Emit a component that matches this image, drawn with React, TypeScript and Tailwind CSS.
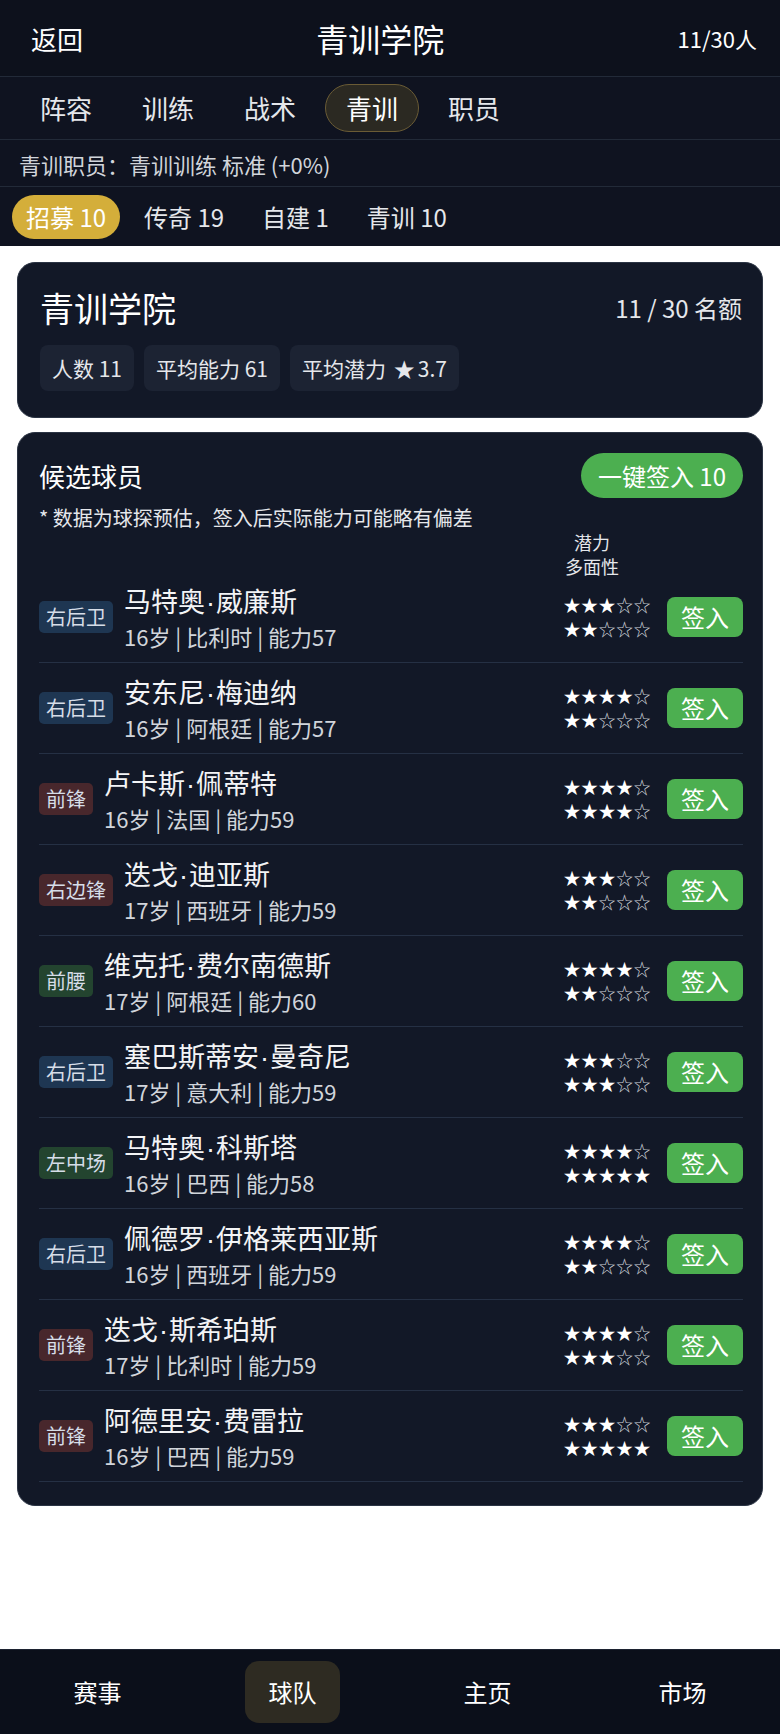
import React from 'react';

type Player = {
  pos: string;
  name: string;
  age: number;
  nation: string;
  ovr: number;
  pot: number;
  vers: number;
};

const players: Player[] = [
  { pos: '右后卫', name: '马特奥·威廉斯', age: 16, nation: '比利时', ovr: 57, pot: 3, vers: 2 },
  { pos: '右后卫', name: '安东尼·梅迪纳', age: 16, nation: '阿根廷', ovr: 57, pot: 4, vers: 2 },
  { pos: '前锋', name: '卢卡斯·佩蒂特', age: 16, nation: '法国', ovr: 59, pot: 4, vers: 4 },
  { pos: '右边锋', name: '迭戈·迪亚斯', age: 17, nation: '西班牙', ovr: 59, pot: 3, vers: 2 },
  { pos: '前腰', name: '维克托·费尔南德斯', age: 17, nation: '阿根廷', ovr: 60, pot: 4, vers: 2 },
  { pos: '右后卫', name: '塞巴斯蒂安·曼奇尼', age: 17, nation: '意大利', ovr: 59, pot: 3, vers: 3 },
  { pos: '左中场', name: '马特奥·科斯塔', age: 16, nation: '巴西', ovr: 58, pot: 4, vers: 5 },
  { pos: '右后卫', name: '佩德罗·伊格莱西亚斯', age: 16, nation: '西班牙', ovr: 59, pot: 4, vers: 2 },
  { pos: '前锋', name: '迭戈·斯希珀斯', age: 17, nation: '比利时', ovr: 59, pot: 4, vers: 3 },
  { pos: '前锋', name: '阿德里安·费雷拉', age: 16, nation: '巴西', ovr: 59, pot: 3, vers: 5 },
];

const posStyle: Record<string, string> = {
  右后卫: 'bg-[#1e3652]',
  前锋: 'bg-[#48272c]',
  右边锋: 'bg-[#48272c]',
  前腰: 'bg-[#23442f]',
  左中场: 'bg-[#23442f]',
};

const Stars: React.FC<{ n: number }> = ({ n }) => (
  <div className="tracking-[0.5px]">
    {[0, 1, 2, 3, 4].map((i) => (
      <span key={i} className={i < n ? 'text-white' : 'text-gray-300'}>
        {i < n ? '★' : '☆'}
      </span>
    ))}
  </div>
);

// the CJK font draws "·" full width; the reference has a narrow latin dot
const Name: React.FC<{ text: string }> = ({ text }) => {
  const [first, last] = text.split('·');
  return (
    <>
      {first}
      <span className="font-['Liberation_Sans',sans-serif] mx-[1px]">·</span>
      {last}
    </>
  );
};

const PlayerRow: React.FC<{ p: Player }> = ({ p }) => (
  <div className="h-[91px] flex items-center border-b border-[#253044]">
    <span className={`${posStyle[p.pos]} h-[32px] px-[7px] rounded-[5px] text-[20px] leading-[32px] text-[#d6dde8] shrink-0`}>
      {p.pos}
    </span>
    <div className="ml-[11px] flex flex-col">
      <span className="text-[27px] leading-[36px] text-[#f3f4f6]">
        <Name text={p.name} />
      </span>
      <span className="text-[22px] leading-[30px] text-[#d1d5db]">
        {p.age}岁 | {p.nation} | 能力{p.ovr}
      </span>
    </div>
    <div className="ml-auto text-[17px] leading-[24px]">
      <Stars n={p.pot} />
      <Stars n={p.vers} />
    </div>
    <button className="ml-[16px] h-[40px] px-[14px] rounded-[8px] bg-[#4caf50] text-white text-[24px] leading-[40px]">
      签入
    </button>
  </div>
);

export default function App() {
  const tabs = ['阵容', '训练', '战术', '青训', '职员'];
  const subTabs = ['招募 10', '传奇 19', '自建 1', '青训 10'];
  const nav = ['赛事', '球队', '主页', '市场'];

  return (
    <div className="min-h-[1734px] flex flex-col bg-white font-['Noto_Sans_CJK_SC','Noto_Sans',sans-serif]">
      {/* top bar */}
      <div className="h-[77px] bg-[#0d111c] border-b border-[#222a38] flex items-center justify-between pl-[31px] pr-[23px] text-white">
        <span className="text-[26px]">返回</span>
        <span className="text-[32px]">青训学院</span>
        <span className="text-[22px]">11/30人</span>
      </div>

      {/* main tabs */}
      <div className="h-[63px] bg-[#0f1320] border-b border-[#222a38] flex items-center gap-[8px] pl-[19px]">
        {tabs.map((t) => (
          <span
            key={t}
            className={
              t === '青训'
                ? 'h-[48px] px-[20px] rounded-full border border-[#6a5b35] bg-[#2b2922] text-white text-[26px] leading-[46px]'
                : 'h-[48px] px-[21px] text-[#e5e7eb] text-[26px] leading-[48px]'
            }
          >
            {t}
          </span>
        ))}
      </div>

      {/* staff line */}
      <div className="h-[47px] bg-[#0f1320] border-b border-[#222a38] flex items-center pl-[19px] pt-[2px] text-[22px] text-[#d1d5db]">
        青训职员：青训训练 标准 (+0%)
      </div>

      {/* sub tabs */}
      <div className="h-[59px] bg-[#0f1320] flex items-center gap-[10px] pl-[12px]">
        {subTabs.map((t, i) => (
          <span
            key={t}
            className={
              i === 0
                ? 'h-[44px] px-[14px] rounded-full bg-[#d4ae3a] text-white text-[24px] leading-[44px]'
                : 'h-[44px] px-[14px] text-[#e5e7eb] text-[24px] leading-[44px]'
            }
          >
            {t}
          </span>
        ))}
      </div>

      {/* academy summary */}
      <div className="mx-[17px] mt-[16px] rounded-[18px] bg-[#121827] border border-[#2b3444] pt-[23px] pb-[26px] pl-[22px] pr-[20px]">
        <div className="flex items-center justify-between">
          <span className="text-[34px] leading-[44px] text-white">青训学院</span>
          <span className="text-[24px] text-[#e5e7eb]">11 / 30 名额</span>
        </div>
        <div className="mt-[15px] flex gap-[10px]">
          <span className="h-[46px] px-[12px] rounded-[8px] bg-[#1c2333] text-[21px] leading-[46px] text-[#e5e7eb]">人数 11</span>
          <span className="h-[46px] px-[12px] rounded-[8px] bg-[#1c2333] text-[21px] leading-[46px] text-[#e5e7eb]">平均能力 61</span>
          <span className="h-[46px] px-[12px] rounded-[8px] bg-[#1c2333] text-[21px] leading-[46px] text-[#e5e7eb]">
            平均潜力 <span className="mx-[3px]">★</span>3.7
          </span>
        </div>
      </div>

      {/* candidates */}
      <div className="mx-[17px] mt-[14px] rounded-[18px] bg-[#121827] border border-[#2b3444] pt-[20px] pb-[23px] pl-[21px] pr-[19px]">
        <div className="flex items-center justify-between">
          <span className="text-[26px] text-white">候选球员</span>
          <button className="h-[45px] px-[17px] rounded-full bg-[#4caf50] text-white text-[24px] leading-[45px]">
            一键签入 10
          </button>
        </div>
        <div className="mt-[6px] text-[20px] leading-[28px] text-[#e5e7eb]">* 数据为球探预估，签入后实际能力可能略有偏差</div>
        <div className="-mt-[2px] -mb-[6px] flex justify-end">
          <div className="w-[60px] text-center text-[18px] leading-[24px] text-[#e5e7eb]">
            <div>潜力</div>
            <div>多面性</div>
          </div>
          <div className="w-[121px]" />
        </div>
        {players.map((p) => (
          <PlayerRow key={p.name} p={p} />
        ))}
      </div>

      {/* bottom nav */}
      <div className="mt-auto h-[85px] bg-[#0b0f1a] border-t border-[#1c2230] grid grid-cols-4 items-center">
        {nav.map((n) => (
          <div key={n} className="flex justify-center">
            <span
              className={
                n === '球队'
                  ? 'w-[95px] h-[62px] rounded-[14px] bg-[#2e2b22] flex items-center justify-center text-white text-[24px]'
                  : 'h-[62px] flex items-center text-white text-[24px]'
              }
            >
              {n}
            </span>
          </div>
        ))}
      </div>
    </div>
  );
}
